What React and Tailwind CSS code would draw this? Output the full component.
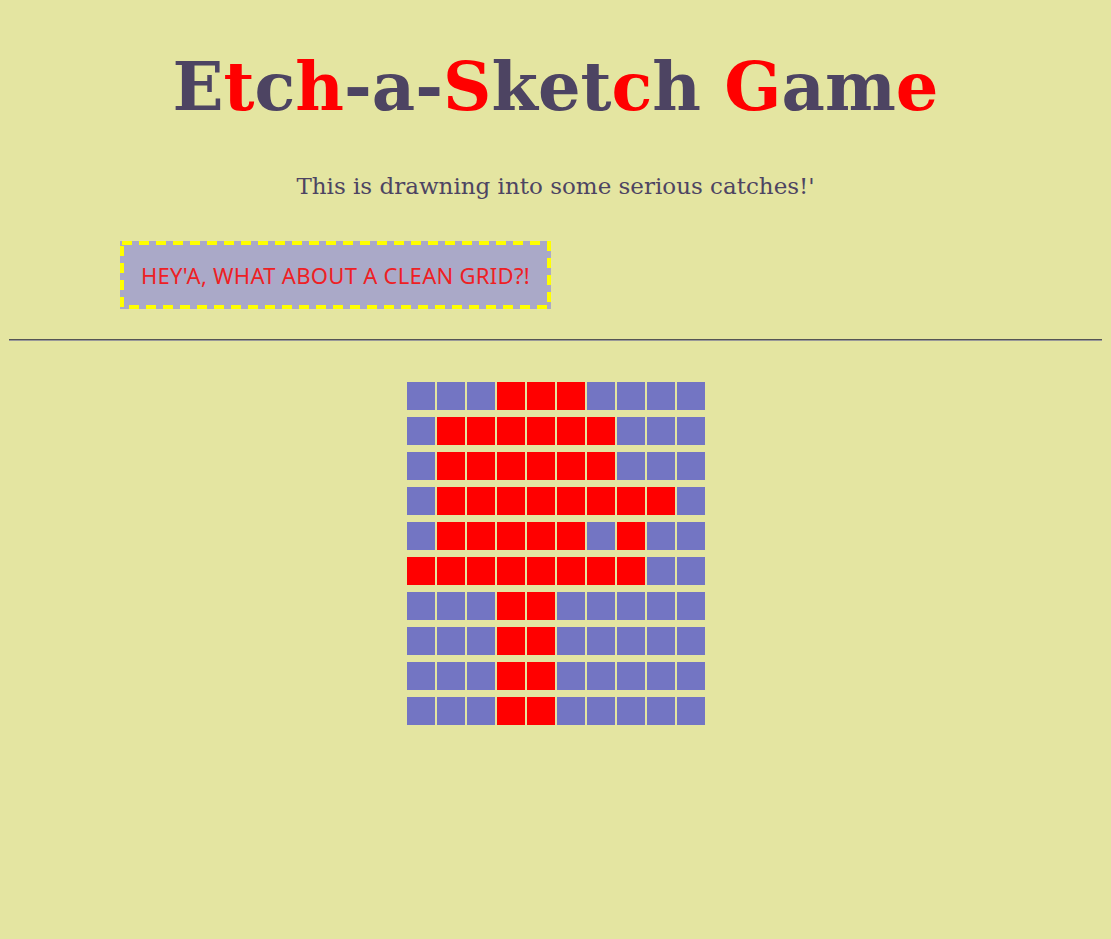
const rows = [
  "0001110000",
  "0111111000",
  "0111111000",
  "0111111110",
  "0111110100",
  "1111111100",
  "0001100000",
  "0001100000",
  "0001100000",
  "0001100000",
];

const title = [
  ["E", 0], ["t", 1], ["c", 0], ["h", 1], ["-a-", 0], ["S", 1], ["ket", 0], ["c", 1], ["h ", 0], ["G", 1], ["am", 0], ["e", 1],
];

export default function App() {
  return (
    <div className="min-h-screen bg-[#e4e5a1] pt-[48px]">
      <h1 className="text-center text-[67px] leading-[78px] font-bold text-[#4d4462] font-['DejaVu_Serif',serif]">
        {title.map(([t, red], i) => (
          <span key={i} className={red ? "text-[#ff0000]" : ""}>
            {t}
          </span>
        ))}
      </h1>
      <p className="mt-[45px] text-center text-[23px] leading-[30px] text-[#4d4462] font-['DejaVu_Serif',serif]">
        This is drawning into some serious catches!'
      </p>
      <div className="mt-[40px] pl-[120px]">
        <button className="relative h-[68px] w-[431px] bg-[#aaa9c8] text-[22px] tracking-[0.3px] text-[#ee2024] uppercase font-['Noto_Sans',sans-serif]">
          <svg className="absolute inset-0 h-full w-full" viewBox="0 0 431 68">
            <rect x="2" y="2" width="427" height="64" fill="none" stroke="#ffff00" strokeWidth="4" strokeDasharray="10 7" />
          </svg>
          <span className="relative">Hey'a, what about a clean grid?!</span>
        </button>
      </div>
      <hr className="mx-[9px] mt-[30px] border-t border-b border-t-[#555] border-b-[#999]" />
      <div className="mt-[41px] flex flex-col items-center gap-[7px]">
        {rows.map((r, i) => (
          <div key={i} className="flex gap-[2px]">
            {r.split("").map((c, j) => (
              <div
                key={j}
                className={`h-[28px] w-[28px] ${c === "1" ? "bg-[#ff0000]" : "bg-[#7375c3]"}`}
              />
            ))}
          </div>
        ))}
      </div>
    </div>
  );
}
